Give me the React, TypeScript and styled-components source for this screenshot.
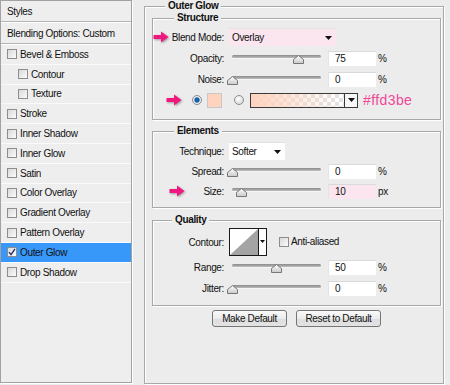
import React from 'react';
import styled, { createGlobalStyle } from 'styled-components';

const GlobalStyle = createGlobalStyle`
  html, body {
    margin: 0;
    padding: 0;
  }
  body {
    background: #ececec;
    font-family: 'Liberation Sans', Arial, sans-serif;
    font-size: 10px;
    letter-spacing: -0.35px;
    color: #111111;
  }
`;

const styleItems = [
  { name: 'Bevel & Emboss' },
  { name: 'Contour', sub: true },
  { name: 'Texture', sub: true },
  { name: 'Stroke' },
  { name: 'Inner Shadow' },
  { name: 'Inner Glow' },
  { name: 'Satin' },
  { name: 'Color Overlay' },
  { name: 'Gradient Overlay' },
  { name: 'Pattern Overlay' },
  { name: 'Outer Glow', checked: true },
  { name: 'Drop Shadow' },
];

const PinkArrow: React.FC<{ gap: string }> = ({ gap }) => (
  <Pointer $gap={gap} width="16" height="12" viewBox="0 0 16 12">
    <path d="M0.5 4 H8 V0.5 L15.5 6 L8 11.5 V8 H0.5 Z" fill="#f0177e" />
  </Pointer>
);

const DropTriangle: React.FC = () => (
  <svg width="7" height="4" viewBox="0 0 7 4">
    <path d="M0 0 H7 L3.5 4 Z" fill="#111" />
  </svg>
);

const Slider: React.FC<{ pos: number }> = ({ pos }) => (
  <SliderWrap>
    <Track />
    <Thumb style={{ left: 3 + pos * 89 - 5.5 }} width="11" height="9" viewBox="0 0 11 9">
      <defs>
        <linearGradient id="thumbFill" x1="0" y1="0" x2="0" y2="1">
          <stop offset="0" stopColor="#ffffff" />
          <stop offset="1" stopColor="#c9c9c9" />
        </linearGradient>
      </defs>
      <path d="M0.5 8.5 V4.5 L5.5 0.5 L10.5 4.5 V8.5 Z" fill="url(#thumbFill)" stroke="#777" />
    </Thumb>
  </SliderWrap>
);

const SliderRow: React.FC<{ label: string; pos: number; value: string; unit: string; pink?: boolean; arrow?: boolean }> = ({
  label,
  pos,
  value,
  unit,
  pink,
  arrow,
}) => (
  <Row>
    <Label>
      {arrow && <PinkArrow gap="19px" />}
      {label}
    </Label>
    <Controls>
      <Slider pos={pos} />
      <NumberField $pink={pink}>{value}</NumberField>
      <Unit>{unit}</Unit>
    </Controls>
  </Row>
);

const App: React.FC = () => {
  return (
    <>
      <GlobalStyle />
      <Page>
        <StylesPanel>
          <PanelHeader>Styles</PanelHeader>
          <PanelHeader>Blending Options: Custom</PanelHeader>
          {styleItems.map((item) => (
            <StyleItem key={item.name} $sub={item.sub} $selected={item.checked}>
              <CheckBox>
                {item.checked && (
                  <svg width="8" height="8" viewBox="0 0 8 8">
                    <path d="M1 4.2 L3 6.6 L7 0.8" fill="none" stroke="#1d2d66" strokeWidth="1.3" />
                  </svg>
                )}
              </CheckBox>
              {item.name}
            </StyleItem>
          ))}
        </StylesPanel>

        <OuterGroup>
          <GroupTitle $left={13}>Outer Glow</GroupTitle>

          <InnerGroup $top={0} $pt={3} $pb={9}>
            <GroupTitle $left={21}>Structure</GroupTitle>
            <RowStack $gap={1}>
              <Row>
                <Label>
                  <PinkArrow gap="auto" />
                  Blend Mode:
                </Label>
                <Controls>
                  <SelectBox $width={107} $pink>
                    Overlay
                    <DropTriangle />
                  </SelectBox>
                </Controls>
              </Row>
              <SliderRow label="Opacity:" pos={0.75} value="75" unit="%" />
              <SliderRow label="Noise:" pos={0} value="0" unit="%" />
              <Row>
                <Label>
                  <PinkArrow gap="10px" />
                  <Radio $on />
                  <Swatch />
                </Label>
                <Controls>
                  <Radio />
                  <GradientBox>
                    <GradientFill />
                    <GradientArrow>
                      <DropTriangle />
                    </GradientArrow>
                  </GradientBox>
                  <HexText>#ffd3be</HexText>
                </Controls>
              </Row>
            </RowStack>
          </InnerGroup>

          <InnerGroup $top={5} $pt={4} $pb={6}>
            <GroupTitle $left={21}>Elements</GroupTitle>
            <RowStack $gap={0}>
              <Row>
                <Label>Technique:</Label>
                <Controls>
                  <SelectBox $width={56}>
                    Softer
                    <DropTriangle />
                  </SelectBox>
                </Controls>
              </Row>
              <SliderRow label="Spread:" pos={0} value="0" unit="%" />
              <SliderRow label="Size:" pos={0.112} value="10" unit="px" pink arrow />
            </RowStack>
          </InnerGroup>

          <InnerGroup $top={6} $pt={2} $pb={7}>
            <GroupTitle $left={19}>Quality</GroupTitle>
            <RowStack $gap={1}>
              <Row $tall>
                <Label>Contour:</Label>
                <Controls>
                  <ContourBox>
                    <svg width="28" height="26" viewBox="0 0 28 26">
                      <rect width="28" height="26" fill="#fff" />
                      <path d="M0 26 L28 0 V26 Z" fill="#a4a4a4" />
                    </svg>
                    <ContourArrow>
                      <svg width="5" height="3" viewBox="0 0 5 3">
                        <path d="M0 0 H5 L2.5 3 Z" fill="#111" />
                      </svg>
                    </ContourArrow>
                  </ContourBox>
                  <AntiAlias>
                    <CheckBox />
                    Anti-aliased
                  </AntiAlias>
                </Controls>
              </Row>
              <SliderRow label="Range:" pos={0.5} value="50" unit="%" />
              <SliderRow label="Jitter:" pos={0} value="0" unit="%" />
            </RowStack>
          </InnerGroup>

          <ButtonBar>
            <Button $width={75}>Make Default</Button>
            <Button $width={85}>Reset to Default</Button>
          </ButtonBar>
        </OuterGroup>
      </Page>
    </>
  );
};

const Page = styled.div`
  display: flex;
  align-items: flex-start;
  gap: 12px;
  width: 450px;
  height: 385px;
`;

const StylesPanel = styled.div`
  width: 132px;
  height: 383px;
  box-sizing: border-box;
  border: 1px solid #a2a2a2;
  box-shadow: 1px 1px 0 #fff;
  background: #eeeeee;
  display: flex;
  flex-direction: column;
`;

const PanelHeader = styled.div`
  height: 21px;
  flex-shrink: 0;
  box-sizing: border-box;
  border-bottom: 1px solid #b3b3b3;
  box-shadow: 0 1px 0 #fff;
  margin-bottom: 1px;
  display: flex;
  align-items: center;
  padding-left: 6px;
`;

const StyleItem = styled.div<{ $sub?: boolean; $selected?: boolean }>`
  height: 19.8px;
  flex-shrink: 0;
  box-sizing: border-box;
  border-bottom: 1px solid #fafafa;
  display: flex;
  align-items: center;
  gap: 3px;
  padding-left: ${(p) => (p.$sub ? 17 : 6)}px;
  background: ${(p) => (p.$selected ? '#3898fa' : 'transparent')};
`;

const CheckBox = styled.span`
  width: 10px;
  height: 10px;
  box-sizing: border-box;
  flex-shrink: 0;
  border: 1px solid #8d8d8d;
  background: linear-gradient(135deg, #d9d9d9, #fbfbfb);
  display: inline-flex;
  align-items: center;
  justify-content: center;
`;

const OuterGroup = styled.fieldset`
  margin: 0;
  padding: 0 2px 0 7px;
  width: 300px;
  height: 384px;
  min-width: 0;
  box-sizing: border-box;
  border: 1px solid #a8a8a8;
  box-shadow: inset 1px 1px 0 #fff, 1px 1px 0 #fff;
  display: flex;
  flex-direction: column;
`;

const GroupTitle = styled.legend<{ $left: number }>`
  margin-left: ${(p) => p.$left}px;
  padding: 0 3px;
  font-weight: bold;
  line-height: 12px;
  background: #ececec;
`;

const InnerGroup = styled.fieldset<{ $top: number; $pt: number; $pb: number }>`
  margin: ${(p) => p.$top}px 0 0 0;
  padding: ${(p) => p.$pt}px 0 ${(p) => p.$pb}px 0;
  min-width: 0;
  border: 1px solid #a8a8a8;
  box-shadow: inset 1px 1px 0 #fff, 1px 1px 0 #fff;
`;

const RowStack = styled.div<{ $gap: number }>`
  display: flex;
  flex-direction: column;
  gap: ${(p) => p.$gap}px;
`;

const Row = styled.div<{ $tall?: boolean }>`
  display: flex;
  align-items: center;
  gap: 5px;
  height: ${(p) => (p.$tall ? 28 : 20)}px;
`;

const Label = styled.div`
  width: 71px;
  flex-shrink: 0;
  display: flex;
  align-items: center;
  justify-content: flex-end;
  white-space: nowrap;
`;

const Controls = styled.div`
  display: flex;
  align-items: center;
`;

const Pointer = styled.svg<{ $gap: string }>`
  margin-right: ${(p) => p.$gap};
  flex-shrink: 0;
  filter: drop-shadow(1px 1px 1px rgba(0, 0, 0, 0.35));
`;

const SelectBox = styled.div<{ $width: number; $pink?: boolean }>`
  width: ${(p) => p.$width}px;
  height: 18px;
  box-sizing: border-box;
  padding: 0 4px 0 3px;
  background: ${(p) => (p.$pink ? '#fbe5ef' : '#ffffff')};
  border-top: 1px solid #e2e2e2;
  display: flex;
  align-items: center;
  justify-content: space-between;
`;

const SliderWrap = styled.div`
  position: relative;
  width: 95px;
  height: 20px;
  margin-right: 4px;
`;

const Track = styled.div`
  position: absolute;
  left: 3px;
  right: 3px;
  top: 7px;
  height: 3px;
  border-radius: 2px;
  background: linear-gradient(#8a8a8a, #bdbdbd);
  box-shadow: 0 1px 0 #f6f6f6;
`;

const Thumb = styled.svg`
  position: absolute;
  top: 7px;
`;

const NumberField = styled.div<{ $pink?: boolean }>`
  width: 48px;
  height: 15px;
  box-sizing: border-box;
  padding-left: 6px;
  background: ${(p) => (p.$pink ? '#fbe5ef' : '#ffffff')};
  border-top: 1px solid #dadada;
  border-left: 1px solid #e4e4e4;
  display: flex;
  align-items: center;
`;

const Unit = styled.span`
  margin-left: 2px;
`;

const Radio = styled.span<{ $on?: boolean }>`
  width: 10px;
  height: 10px;
  box-sizing: border-box;
  flex-shrink: 0;
  border-radius: 50%;
  border: 1px solid #8c8c8c;
  margin-right: ${(p) => (p.$on ? 5 : 6)}px;
  margin-left: ${(p) => (p.$on ? 0 : 5)}px;
  background: ${(p) =>
    p.$on
      ? 'radial-gradient(circle, #1f5f9c 0 2.2px, #6aa3d6 2.6px, #e8eef4 3.2px)'
      : 'radial-gradient(circle at 40% 35%, #ffffff, #cfcfcf)'};
`;

const Swatch = styled.span`
  width: 15px;
  height: 15px;
  box-sizing: border-box;
  margin-right: 2px;
  background: #ffd3be;
  border: 1px solid #c8c8c8;
`;

const GradientBox = styled.div`
  width: 108px;
  height: 15px;
  box-sizing: border-box;
  border: 1px solid #3a3a3a;
  display: flex;
`;

const GradientFill = styled.div`
  flex: 1;
  background: linear-gradient(to right, #ffd3be, rgba(255, 211, 190, 0) 95%),
    repeating-conic-gradient(#e3e3e3 0% 25%, #ffffff 0% 50%) 0 0 / 8px 8px;
`;

const GradientArrow = styled.div`
  width: 12px;
  border-left: 1px solid #3a3a3a;
  background: #f7f7f7;
  display: flex;
  align-items: center;
  justify-content: center;
`;

const HexText = styled.span`
  margin-left: 5px;
  font-size: 14px;
  letter-spacing: 0.4px;
  color: #ef4897;
`;

const ContourBox = styled.div`
  display: flex;
  height: 28px;
  box-sizing: border-box;
  border: 1px solid #1a1a1a;
  background: #fff;
`;

const ContourArrow = styled.div`
  width: 8px;
  border-left: 1px solid #1a1a1a;
  display: flex;
  justify-content: center;
  padding-top: 11px;
  box-sizing: border-box;
`;

const AntiAlias = styled.label`
  display: flex;
  align-items: center;
  gap: 2px;
  margin-left: 12px;
  margin-top: -1px;
`;

const ButtonBar = styled.div`
  display: flex;
  justify-content: center;
  gap: 9px;
  margin-top: 4px;
`;

const Button = styled.div<{ $width: number }>`
  width: ${(p) => p.$width}px;
  height: 17px;
  box-sizing: border-box;
  border: 1px solid #767676;
  border-radius: 3px;
  background: linear-gradient(#fafafa, #ebebeb 50%, #dddddd 51%, #e3e3e3);
  display: flex;
  align-items: center;
  justify-content: center;
`;

export default App;
